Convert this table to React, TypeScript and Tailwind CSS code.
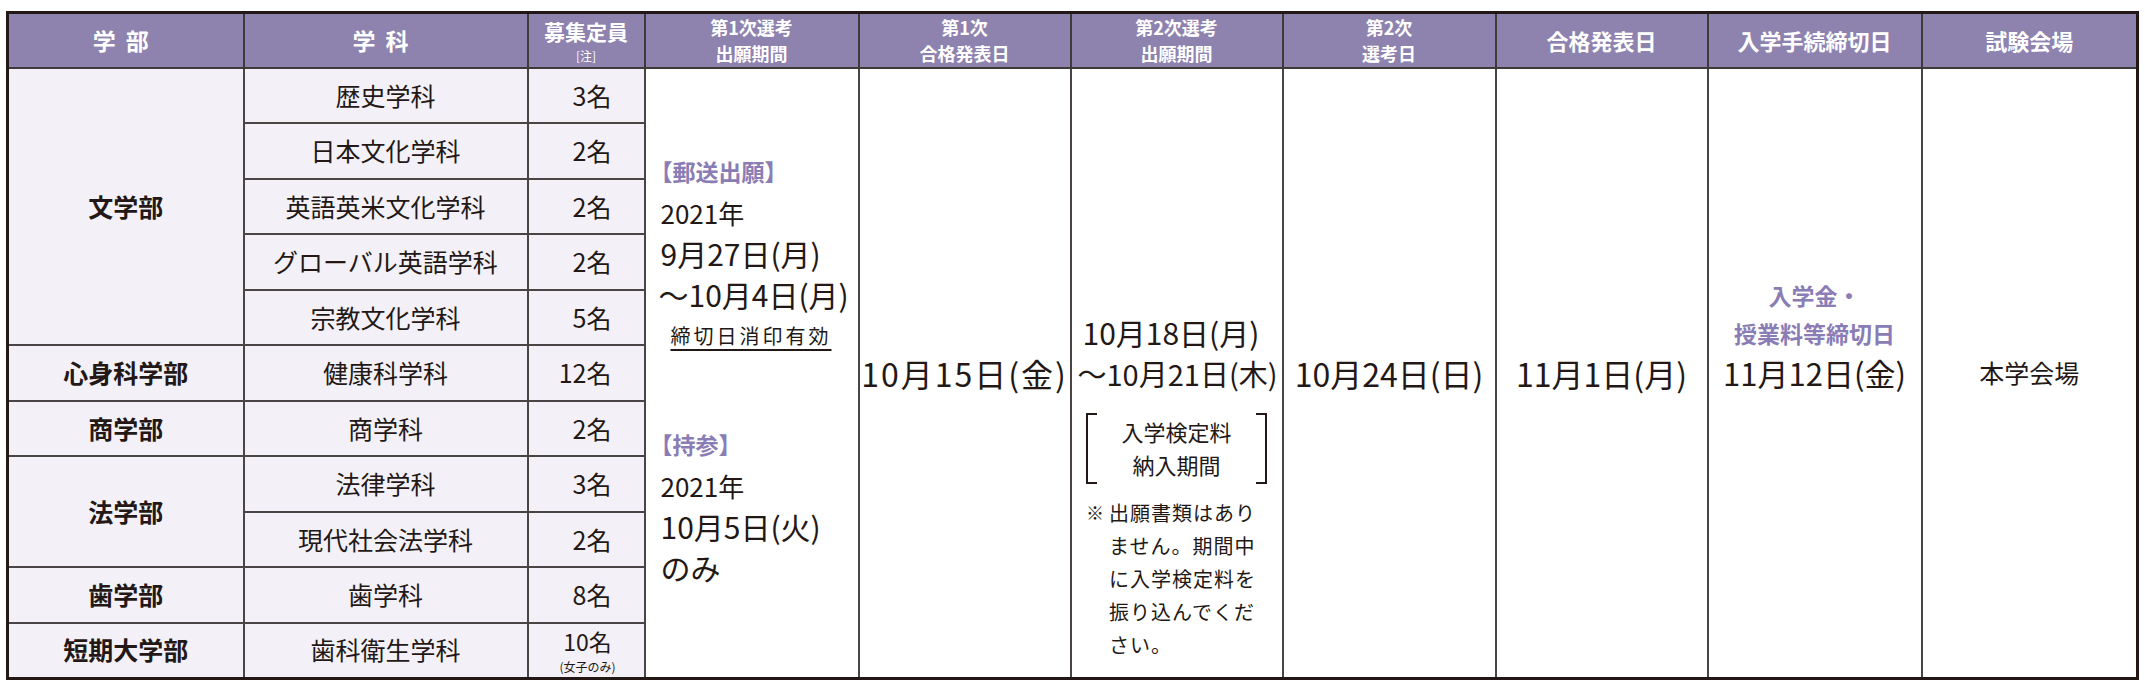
import React from 'react';

type Row = { faculty?: string; span?: number; dept: string; cap: string; note?: string };

const rows: Row[] = [
  { faculty: '文学部', span: 5, dept: '歴史学科', cap: '3名' },
  { dept: '日本文化学科', cap: '2名' },
  { dept: '英語英米文化学科', cap: '2名' },
  { dept: 'グローバル英語学科', cap: '2名' },
  { dept: '宗教文化学科', cap: '5名' },
  { faculty: '心身科学部', span: 1, dept: '健康科学科', cap: '12名' },
  { faculty: '商学部', span: 1, dept: '商学科', cap: '2名' },
  { faculty: '法学部', span: 2, dept: '法律学科', cap: '3名' },
  { dept: '現代社会法学科', cap: '2名' },
  { faculty: '歯学部', span: 1, dept: '歯学科', cap: '8名' },
  { faculty: '短期大学部', span: 1, dept: '歯科衛生学科', cap: '10名', note: '(女子のみ)' },
];

const th = 'p-0 bg-[#8e82af] text-white font-bold border-2 border-[#3e3a39] text-center align-middle';
const td = 'p-0 border-2 border-[#4a4444]';
const pale = 'bg-[#f3f1f7]';

const FirstPeriod = () => (
  <div className="flex flex-col pl-[15px] pb-[6px] text-[#231815]">
    <div className="leading-[41px] text-[23px] font-bold text-[#8a7cb4] -ml-[11px]">【郵送出願】</div>
    <div className="leading-[41px] text-[26px]">2021年</div>
    <div className="leading-[41px] text-[30px]">9月27日(月)</div>
    <div className="leading-[41px] text-[30px] -ml-[2px]">～10月4日(月)</div>
    <div className="leading-[41px] text-[20px] pl-[10px]">
      <span className="underline underline-offset-[5px] tracking-[3px]">締切日消印有効</span>
    </div>
    <div className="h-[68px]" />
    <div className="leading-[41px] text-[23px] font-bold text-[#8a7cb4] -ml-[11px]">【持参】</div>
    <div className="leading-[41px] text-[26px]">2021年</div>
    <div className="leading-[41px] text-[30px]">10月5日(火)</div>
    <div className="leading-[41px] text-[30px]">のみ</div>
  </div>
);

const SecondPeriod = () => (
  <div className="flex flex-col items-center pt-[243px] text-[#231815]">
    <div className="w-full pl-[11px] leading-[41px] text-[30px]">10月18日(月)</div>
    <div className="w-full pl-[6px] leading-[41px] text-[29px] whitespace-nowrap">～10月21日(木)</div>
    <div className="mt-[19px] flex h-[71px] w-[181px] items-stretch justify-between">
      <div className="w-[11px] border-y-2 border-l-2 border-[#231815]" />
      <div className="flex flex-col items-center justify-center text-[22px] leading-[33px]">
        <span>入学検定料</span>
        <span>納入期間</span>
      </div>
      <div className="w-[11px] border-y-2 border-r-2 border-[#231815]" />
    </div>
    <div className="mt-[12px] flex w-[181px] text-[20px] leading-[33px]">
      <span className="w-[23px] shrink-0 text-[18px]">※</span>
      <div className="flex flex-col tracking-[1px]">
        <span>出願書類はあり</span>
        <span>ません。期間中</span>
        <span>に入学検定料を</span>
        <span>振り込んでくだ</span>
        <span>さい。</span>
      </div>
    </div>
  </div>
);

export default function App() {
  return (
    <div className="min-h-screen w-[2145px] bg-white pl-[6px] pt-[11px] font-['Noto_Sans_CJK_JP','Noto_Sans',sans-serif] text-[#231815]">
      <table className="w-[2130px] table-fixed border-collapse border-[3px] border-[#231815]">
        <colgroup>
          <col className="w-[236px]" />
          <col className="w-[284px]" />
          <col className="w-[117px]" />
          <col className="w-[214px]" />
          <col className="w-[212px]" />
          <col className="w-[212px]" />
          <col className="w-[213px]" />
          <col className="w-[212px]" />
          <col className="w-[214px]" />
          <col className="w-[216px]" />
        </colgroup>
        <thead>
          <tr className="h-[55px]">
            <th className={`${th} text-[23px] tracking-[10px]`}>学部</th>
            <th className={`${th} text-[23px] tracking-[10px]`}>学科</th>
            <th className={th}>
              <div className="text-[21px] leading-[31px]">募集定員</div>
              <div className="text-[12px] font-normal leading-[18px]">[注]</div>
            </th>
            <th className={`${th} text-[18px] leading-[26px]`}>
              第1次選考
              <br />
              出願期間
            </th>
            <th className={`${th} text-[18px] leading-[26px]`}>
              第1次
              <br />
              合格発表日
            </th>
            <th className={`${th} text-[18px] leading-[26px]`}>
              第2次選考
              <br />
              出願期間
            </th>
            <th className={`${th} text-[18px] leading-[26px]`}>
              第2次
              <br />
              選考日
            </th>
            <th className={`${th} text-[22px]`}>合格発表日</th>
            <th className={`${th} text-[22px]`}>入学手続締切日</th>
            <th className={`${th} text-[22px]`}>試験会場</th>
          </tr>
        </thead>
        <tbody>
          {rows.map((r, i) => (
            <tr key={r.dept} className="h-[55.5px]">
              {r.faculty && (
                <td rowSpan={r.span} className={`${td} ${pale} text-center text-[25px] font-bold`}>
                  {r.faculty}
                </td>
              )}
              <td className={`${td} ${pale} text-center text-[25px]`}>{r.dept}</td>
              <td className={`${td} ${pale} text-right text-[25px]`}>
                {r.note ? (
                  <div className="ml-auto mr-[28px] flex w-fit flex-col items-center">
                    <span className="text-[23px] leading-[33px]">{r.cap}</span>
                    <span className="text-[12px] leading-[18px]">{r.note}</span>
                  </div>
                ) : (
                  <span className="pr-[32px]">{r.cap}</span>
                )}
              </td>
              {i === 0 && (
                <>
                  <td rowSpan={11} className={`${td} align-middle`}>
                    <FirstPeriod />
                  </td>
                  <td rowSpan={11} className={`${td} text-center text-[32px] tracking-[2px]`}>
                    10月15日(金)
                  </td>
                  <td rowSpan={11} className={`${td} align-top`}>
                    <SecondPeriod />
                  </td>
                  <td rowSpan={11} className={`${td} text-center text-[32px]`}>
                    10月24日(日)
                  </td>
                  <td rowSpan={11} className={`${td} text-center text-[32px]`}>
                    11月1日(月)
                  </td>
                  <td rowSpan={11} className={`${td} align-top text-center`}>
                    <div className="flex flex-col items-center pt-[207px]">
                      <span className="text-[23px] font-bold leading-[38px] text-[#8a7cb4]">入学金・</span>
                      <span className="text-[23px] font-bold leading-[38px] text-[#8a7cb4]">授業料等締切日</span>
                      <span className="text-[31px] leading-[41px]">11月12日(金)</span>
                    </div>
                  </td>
                  <td rowSpan={11} className={`${td} text-center text-[25px]`}>
                    本学会場
                  </td>
                </>
              )}
            </tr>
          ))}
        </tbody>
      </table>
    </div>
  );
}
